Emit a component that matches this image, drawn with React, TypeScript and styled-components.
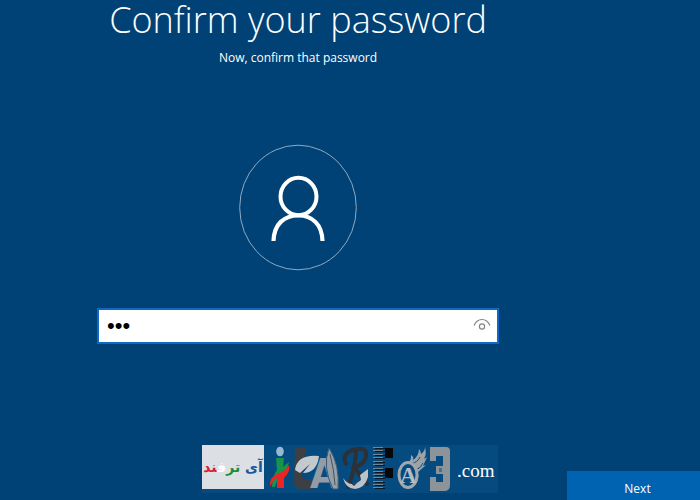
import React, { useState } from "react";
import styled, { createGlobalStyle } from "styled-components";

const GlobalStyle = createGlobalStyle`
  * { box-sizing: border-box; }
  body {
    margin: 0;
    background: #004275;
    color: #fff;
    font-family: "Open Sans", "Noto Sans", sans-serif;
  }
`;

const Page = styled.form`
  min-height: 100vh;
  display: flex;
  flex-direction: column;
`;

const Content = styled.main`
  flex: 1;
  display: flex;
  flex-direction: column;
  align-items: center;
  padding: 0 104px 0 0;
`;

const Title = styled.h1`
  margin: 0;
  font-size: 36px;
  line-height: 40px;
  font-weight: 300;
  white-space: nowrap;
`;

const Subtitle = styled.label`
  margin-top: 8px;
  font-size: 12px;
  line-height: 20px;
`;

const Avatar = styled.svg`
  width: 120px;
  height: 128px;
  margin-top: 76px;
`;

const Field = styled.div`
  display: flex;
  align-items: center;
  width: 100%;
  max-width: 402px;
  height: 36px;
  margin-top: 36px;
  padding: 0 6px 0 8px;
  border: 2px solid #1068c4;
  background: #fff;
`;

const PasswordInput = styled.input`
  flex: 1;
  min-width: 0;
  height: 100%;
  padding: 0;
  border: 0;
  outline: 0;
  background: transparent;
  color: #000;
  font-family: "Liberation Sans", sans-serif;
  font-size: 22px;
`;

const RevealButton = styled.button`
  display: flex;
  padding: 0;
  border: 0;
  background: transparent;
  color: #858585;
`;

const Footer = styled.footer`
  display: flex;
  align-items: flex-end;
  justify-content: space-between;
  padding-left: 202px;
`;

const Brand = styled.div`
  display: flex;
  align-items: flex-start;
  width: 296px;
  height: 48px;
  margin-bottom: 7px;
  background: #064b80;
`;

const BrandName = styled.span`
  display: flex;
  align-items: center;
  justify-content: center;
  width: 62px;
  height: 44px;
  background: #dcdfe3;
  font-family: "DejaVu Sans", sans-serif;
  font-size: 14px;
  font-weight: 700;
  white-space: nowrap;
`;

const Tint = styled.span<{ $color: string }>`
  color: ${({ $color }) => $color};
`;

const BrandArt = styled.svg`
  width: 190px;
  height: 48px;
`;

const Domain = styled.span`
  margin-left: 3px;
  font-family: "Liberation Serif", serif;
  font-size: 19px;
  line-height: 52px;
`;

const NextButton = styled.button`
  width: 133px;
  height: 29px;
  padding: 6px 0 0 8px;
  border: 0;
  background: #0063b1;
  color: #fff;
  font-family: inherit;
  font-size: 12px;
  line-height: 20px;
`;

function PersonIcon() {
  return (
    <Avatar viewBox="0 0 120 128" fill="none" aria-hidden="true">
      <ellipse cx="60" cy="63.500" rx="58.300" ry="62.300" stroke="#8eabc4" />
      <ellipse cx="60.500" cy="52.500" rx="18" ry="18.700" stroke="#fff" strokeWidth="4" />
      <path d="M35.500 97 C36 80 46 71.500 60.500 71.500 C74 71.500 84 80 84.500 97" stroke="#fff" strokeWidth="4.200" />
    </Avatar>
  );
}

function EyeIcon() {
  return (
    <svg width="18" height="18" viewBox="0 0 18 18" fill="none" stroke="currentColor" aria-hidden="true">
      <path d="M1 8.500 C3 4 6 2.500 9 2.500 C12 2.500 15 4 17 8.500" strokeWidth="1.200" />
      <circle cx="9" cy="9.500" r="2.600" strokeWidth="1.200" />
    </svg>
  );
}

function LogoArt() {
  const bars = [1, 4, 8, 11, 15, 18, 22, 25, 28, 31, 35, 38, 41];
  return (
    <BrandArt viewBox="264 445 190 48" aria-hidden="true">
      <ellipse cx="280" cy="451.500" rx="3.800" ry="4.800" fill="#96b8d5" />
      <path d="M276 458h8l-1 9 6-5q-2 10-7 14l-4 2-3 9h-3q0-10 5-17z" fill="#16944a" />
      <path d="M270 487q-1-10 7-13 9-3 12-9 2 6-5 13v10h-7v-10q-4 2-7 9z" fill="#ed2424" />
      <path d="M295 448h10v9l-3 17q0 5 4 5h7v10h-11q-8 0-8-8z" fill="#3c4044" />
      <text x="310" y="488" fill="#939ca4" fontFamily="DejaVu Sans Condensed" fontSize="41" fontWeight="700">A</text>
      <path d="M295 470q2-16 24-14-2 17-16 17l7-9-10 9z" fill="#c4c9ce" />
      <path d="M329 448q-7 19 4 41h5q2-24-9-41z" fill="#969fa7" stroke="#335a77" />
      <path d="M330 454q4 15 5 31" fill="none" stroke="#46545f" />
      <path d="M346 464q-5-10 7-14 14-4 13 5 0 9-13 13M356 451q-1 20-8 36M354 467l13 17" fill="none" stroke="#2d3135" strokeWidth="4" strokeLinecap="round" />
      <path d="M343 478q8 11 18 2l-1-5 8-6v8q-3 11-13 12-9 0-12-11z" fill="#bbc2c8" />
      <path d="M346 479q8 9 15 0l-7 7z" fill="#303a42" />
      {bars.map((bar) => (
        <React.Fragment key={bar}>
          <rect x="373" y={446 + bar} width="10" height="1" fill="#738492" />
          <rect x="375" y={447 + bar} width="10" height="1" fill="#11171c" />
        </React.Fragment>
      ))}
      <rect x="385" y="448" width="8" height="10" fill="#080808" />
      <rect x="385" y="468" width="8" height="10" fill="#080808" />
      <path d="M403 464q9-1 8-9 3 2 2 5 6-4 6-11 2 2 2 5 4-3 4-7 2 7-1 12l3-2-4 9 3-1-8 7q2 10-5 15-3-17-10-23z" fill="#9ba2a8" />
      <path d="M411 464q7-2 9-7M416 470q5-2 7-7" fill="none" stroke="#164d77" />
      <ellipse cx="408" cy="475" rx="9" ry="12.500" fill="#064b80" stroke="#a0a7ad" strokeWidth="3" />
      <text x="400" y="483" fill="#b6bcc1" fontFamily="Liberation Serif" fontSize="23" fontWeight="700">A</text>
      <path d="M430 447h16q4 0 4 4v34q0 6-6 6h-14v-14h6v5h7v-8h-7v-8h7v-10h-7v5h-6z" fill="#8d9499" />
      <path d="M439 468h3v4h-3z" fill="#4b6c86" />
    </BrandArt>
  );
}

export default function App() {
  const [password, setPassword] = useState("abc");
  const [revealed, setRevealed] = useState(false);

  return (
    <>
      <GlobalStyle />
      <Page onSubmit={(event) => event.preventDefault()}>
        <Content>
          <Title>Confirm your password</Title>
          <Subtitle htmlFor="password">Now, confirm that password</Subtitle>
          <PersonIcon />
          <Field>
            <PasswordInput
              id="password"
              type={revealed ? "text" : "password"}
              value={password}
              onChange={(event) => setPassword(event.target.value)}
            />
            <RevealButton type="button" aria-label="Show password" onClick={() => setRevealed(!revealed)}>
              <EyeIcon />
            </RevealButton>
          </Field>
        </Content>
        <Footer>
          <Brand>
            <BrandName lang="fa" dir="rtl">
              <bdi>
                <Tint $color="#17589c">آی </Tint>
                <Tint $color="#218b35">تر</Tint>
                <Tint $color="#ffffff">ف</Tint>
                <Tint $color="#d61f32">ند</Tint>
              </bdi>
            </BrandName>
            <LogoArt />
            <Domain>.com</Domain>
          </Brand>
          <NextButton type="submit">Next</NextButton>
        </Footer>
      </Page>
    </>
  );
}
